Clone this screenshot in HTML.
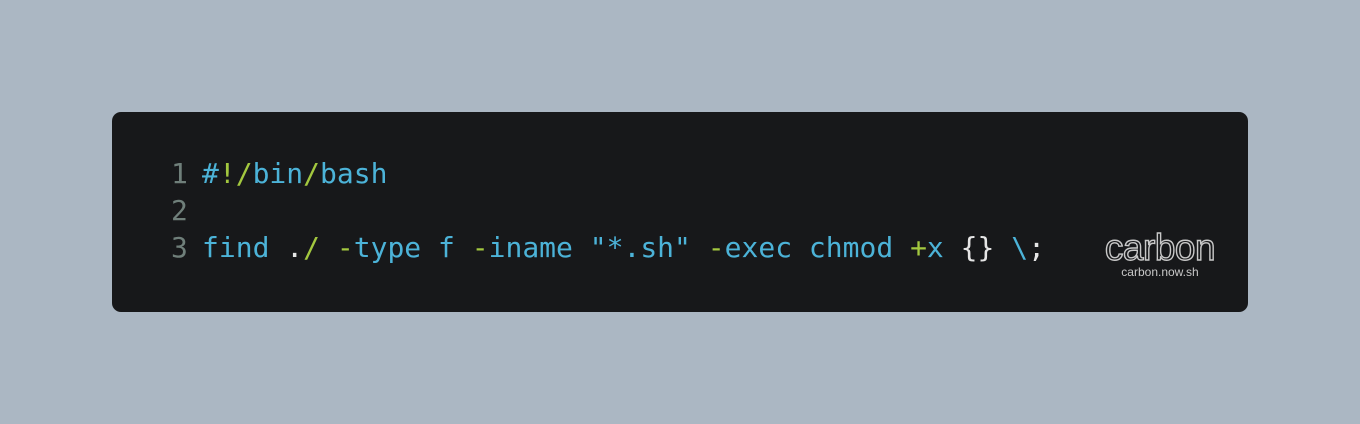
<!DOCTYPE html>
<html><head><style>
html,body{margin:0;padding:0}
body{width:1360px;height:424px;background:#abb7c3;position:relative;overflow:hidden}
.win{position:absolute;left:112px;top:112px;width:1136px;height:200px;background:#17181a;border-radius:9px}
.code{position:absolute;left:202px;top:155px;font-family:"DejaVu Sans Mono","Liberation Mono",monospace;font-size:28px;line-height:37px;color:#4cb3d8;white-space:pre}
.nums{position:absolute;left:171px;top:155px;font-family:"DejaVu Sans Mono","Liberation Mono",monospace;font-size:28px;line-height:37px;color:#6f7f7a;white-space:pre}
.g{color:#a3c83f}
.w{color:#e6e6e6}
.logo{position:absolute;left:1100px;top:228px;width:120px;text-align:center;font-family:"Liberation Sans",sans-serif}
.logo .b{font-size:37px;line-height:40px;color:#17181a;-webkit-text-stroke:1.4px #c8c8c8;letter-spacing:-0.5px}
.logo .s{font-size:12px;color:#c8c8c8;margin-top:-3px}
</style></head><body>
<div class="win"></div>
<div class="nums">1
2
3</div>
<div class="code">#<span class="g">!/</span>bin<span class="g">/</span>bash

find <span class="w">.</span><span class="g">/</span> <span class="g">-</span>type f <span class="g">-</span>iname "*.sh" <span class="g">-</span>exec chmod <span class="g">+</span>x <span class="w">{}</span> \<span class="w">;</span></div>
<div class="logo"><div class="b">carbon</div><div class="s">carbon.now.sh</div></div>
</body></html>
